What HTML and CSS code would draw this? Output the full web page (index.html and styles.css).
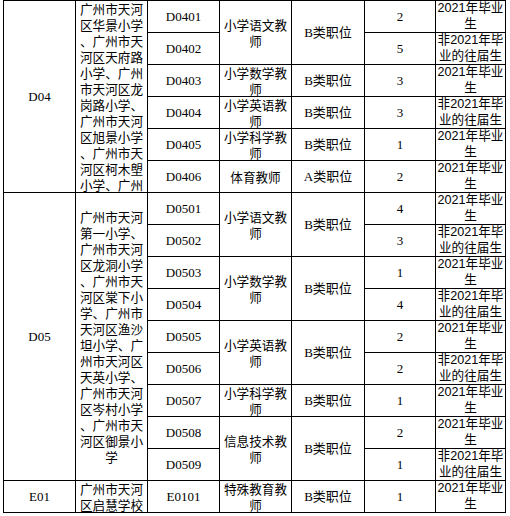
FILE: index.html
```html
<!DOCTYPE html>
<html lang="zh-CN">
<head>
<meta charset="utf-8">
<title>招聘岗位表</title>
<link rel="stylesheet" href="styles.css">
</head>
<body>
<div class="sheet">
  <div class="c s6">D04</div>
  <div class="c s6 cjk school top">广州市天河<br>区华景小学<br>、广州市天<br>河区天府路<br>小学、广州<br>市天河区龙<br>岗路小学、<br>广州市天河<br>区旭景小学<br>、广州市天<br>河区柯木塱<br>小学、广州</div>
  <div class="c">D0401</div>
  <div class="c s2 cjk">小学语文教<br>师</div>
  <div class="c s2">B类职位</div>
  <div class="c">2</div>
  <div class="c grad">2021年毕业<br>生</div>

  <div class="c">D0402</div>
  <div class="c">5</div>
  <div class="c grad">非2021年毕<br>业的往届生</div>

  <div class="c">D0403</div>
  <div class="c cjk">小学数学教<br>师</div>
  <div class="c">B类职位</div>
  <div class="c">3</div>
  <div class="c grad">2021年毕业<br>生</div>

  <div class="c">D0404</div>
  <div class="c cjk">小学英语教<br>师</div>
  <div class="c">B类职位</div>
  <div class="c">3</div>
  <div class="c grad">非2021年毕<br>业的往届生</div>

  <div class="c">D0405</div>
  <div class="c cjk">小学科学教<br>师</div>
  <div class="c">B类职位</div>
  <div class="c">1</div>
  <div class="c grad">2021年毕业<br>生</div>

  <div class="c">D0406</div>
  <div class="c cjk">体育教师</div>
  <div class="c">A类职位</div>
  <div class="c">2</div>
  <div class="c grad">2021年毕业<br>生</div>

  <div class="c s9">D05</div>
  <div class="c s9 cjk school">广州市天河<br>第一小学、<br>广州市天河<br>区龙洞小学<br>、广州市天<br>河区棠下小<br>学、广州市<br>天河区渔沙<br>坦小学、广<br>州市天河区<br>天英小学、<br>广州市天河<br>区岑村小学<br>、广州市天<br>河区御景小<br>学</div>
  <div class="c">D0501</div>
  <div class="c s2 cjk">小学语文教<br>师</div>
  <div class="c s2">B类职位</div>
  <div class="c">4</div>
  <div class="c grad">2021年毕业<br>生</div>

  <div class="c">D0502</div>
  <div class="c">3</div>
  <div class="c grad">非2021年毕<br>业的往届生</div>

  <div class="c">D0503</div>
  <div class="c s2 cjk">小学数学教<br>师</div>
  <div class="c s2">B类职位</div>
  <div class="c">1</div>
  <div class="c grad">2021年毕业<br>生</div>

  <div class="c">D0504</div>
  <div class="c">4</div>
  <div class="c grad">非2021年毕<br>业的往届生</div>

  <div class="c">D0505</div>
  <div class="c s2 cjk">小学英语教<br>师</div>
  <div class="c s2">B类职位</div>
  <div class="c">2</div>
  <div class="c grad">2021年毕业<br>生</div>

  <div class="c">D0506</div>
  <div class="c">2</div>
  <div class="c grad">非2021年毕<br>业的往届生</div>

  <div class="c">D0507</div>
  <div class="c cjk">小学科学教<br>师</div>
  <div class="c">B类职位</div>
  <div class="c">1</div>
  <div class="c grad">2021年毕业<br>生</div>

  <div class="c">D0508</div>
  <div class="c s2 cjk">信息技术教<br>师</div>
  <div class="c s2">B类职位</div>
  <div class="c">2</div>
  <div class="c grad">2021年毕业<br>生</div>

  <div class="c">D0509</div>
  <div class="c">1</div>
  <div class="c grad">非2021年毕<br>业的往届生</div>

  <div class="c">E01</div>
  <div class="c cjk">广州市天河<br>区启慧学校</div>
  <div class="c">E0101</div>
  <div class="c cjk">特殊教育教<br>师</div>
  <div class="c">B类职位</div>
  <div class="c">1</div>
  <div class="c grad">2021年毕业<br>生</div>
</div>
</body>
</html>
```

FILE: styles.css
```css
html, body {
  margin: 0;
  background: #fff;
}

body {
  font-family: "Liberation Serif", "Noto Sans CJK SC", serif;
  font-size: 13px;
  color: #000;
}

.sheet {
  display: grid;
  grid-template-columns: 71px 71px 71px 71px 72px 70px 69px;
  grid-auto-rows: 31px;
  gap: 1px;
  background: #000;
  border: 1px solid #000;
  width: max-content;
  margin-left: 3px;
}

.c {
  background: #fff;
  display: flex;
  align-items: center;
  justify-content: center;
  text-align: center;
  line-height: 15.5px;
  overflow: hidden;
  white-space: nowrap;
}

.s2 { grid-row: span 2; }
.s6 { grid-row: span 6; }
.s9 { grid-row: span 9; }

.cjk {
  font-family: "Noto Sans CJK SC", sans-serif;
  font-size: 12.6px;
}

.school {
  line-height: 16px;
}

.top {
  align-items: flex-start;
}

.grad {
  font-family: "Liberation Sans", "Noto Sans CJK SC", sans-serif;
  font-size: 12.6px;
}
```
